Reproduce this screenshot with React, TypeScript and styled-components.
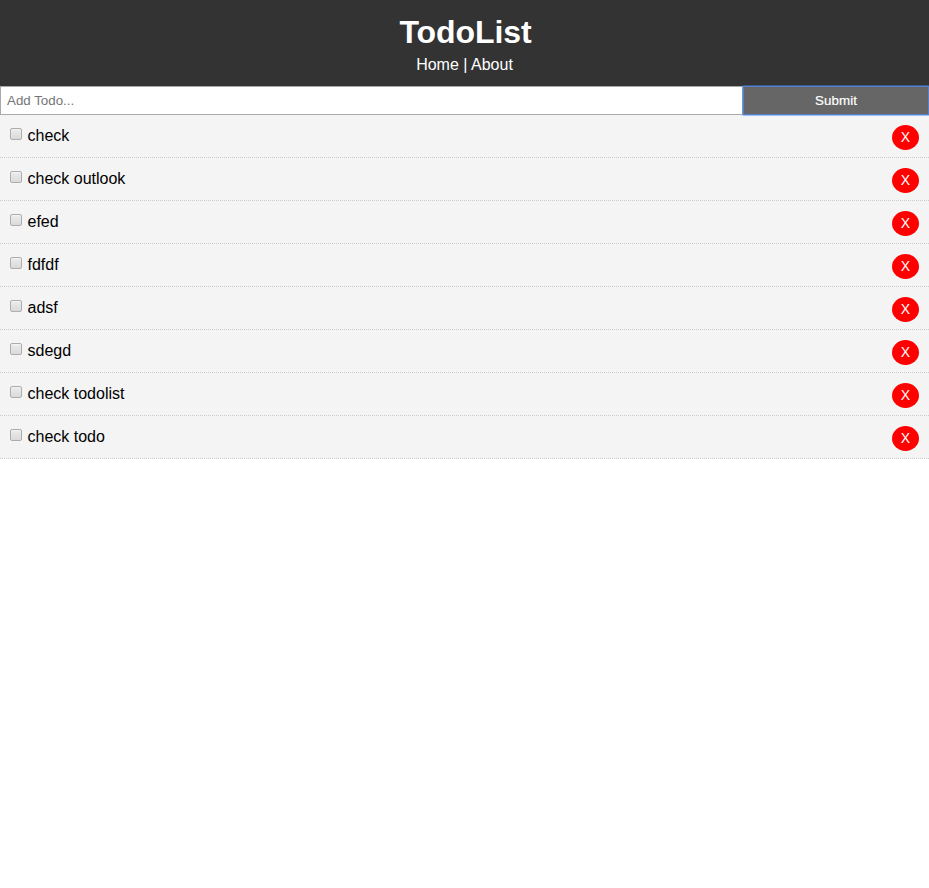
import React from "react";
import styled, { createGlobalStyle } from "styled-components";

const GlobalStyle = createGlobalStyle`
  * { box-sizing: border-box; margin: 0; padding: 0; }
  body { font-family: "Liberation Sans", Arial, Helvetica, sans-serif; line-height: 1.4; background: #fff; }
`;

const Header = styled.header`
  background: #333;
  color: #fff;
  text-align: center;
  padding: 10px;
  height: 86px;
`;

const Title = styled.h1`
  font-size: 32px;
  line-height: 44px;
  font-weight: bold;
  letter-spacing: -0.1px;
  padding-left: 2px;
`;

const NavLink = styled.a`
  color: #fff;
  text-decoration: none;
`;

const Form = styled.form`
  display: flex;
  height: 29px;
`;

const TextInput = styled.input`
  flex: 1;
  min-width: 0;
  padding: 5px 6px;
  border: 1px solid #a9a9a9;
  border-radius: 0;
  font: 13.333px "Liberation Sans", Arial, sans-serif;
  outline: none;
  &::placeholder { color: #757575; }
`;

const SubmitButton = styled.button`
  width: 186px;
  border: none;
  border-radius: 1px;
  background: #666;
  color: #fff;
  font: 13.333px "Liberation Sans", Arial, sans-serif;
  letter-spacing: 0.1px;
  -webkit-text-stroke: 0.2px #fff;
  box-shadow: 0 0 0 1px rgba(77, 134, 234, 0.5), inset 0 0 0 1px #5580cb;
  cursor: pointer;
`;

const Item = styled.li`
  display: flex;
  justify-content: space-between;
  height: 43px;
  padding: 10px;
  background: #f4f4f4;
  border-bottom: 1px dotted #ccc;
`;

const Label = styled.label`
  display: flex;
  height: 22px;
  gap: 5.5px;
  line-height: 22px;
`;

const Checkbox = styled.input`
  appearance: none;
  width: 12px;
  height: 12px;
  margin-top: 3px;
  border: 1px solid #adadad;
  border-radius: 2px;
  background: linear-gradient(#ececec, #dadada);
  box-shadow: inset 0 1px 1px #f3f3f3;
`;

const DeleteButton = styled.button`
  width: 27px;
  height: 25px;
  padding-bottom: 2px;
  border: none;
  border-radius: 50%;
  background: #f00;
  color: #fff;
  font: 14px "Liberation Sans", Arial, sans-serif;
  cursor: pointer;
`;

const todos = ["check", "check outlook", "efed", "fdfdf", "adsf", "sdegd", "check todolist", "check todo"];

export default function App() {
  return (
    <>
      <GlobalStyle />
      <Header>
        <Title>TodoList</Title>
        <NavLink>Home</NavLink> | <NavLink>About</NavLink>
      </Header>
      <Form onSubmit={(e) => e.preventDefault()}>
        <TextInput placeholder="Add Todo..." />
        <SubmitButton>Submit</SubmitButton>
      </Form>
      <ul>
        {todos.map((t) => (
          <Item key={t}>
            <Label>
              <Checkbox type="checkbox" />
              {t}
            </Label>
            <DeleteButton>X</DeleteButton>
          </Item>
        ))}
      </ul>
    </>
  );
}
